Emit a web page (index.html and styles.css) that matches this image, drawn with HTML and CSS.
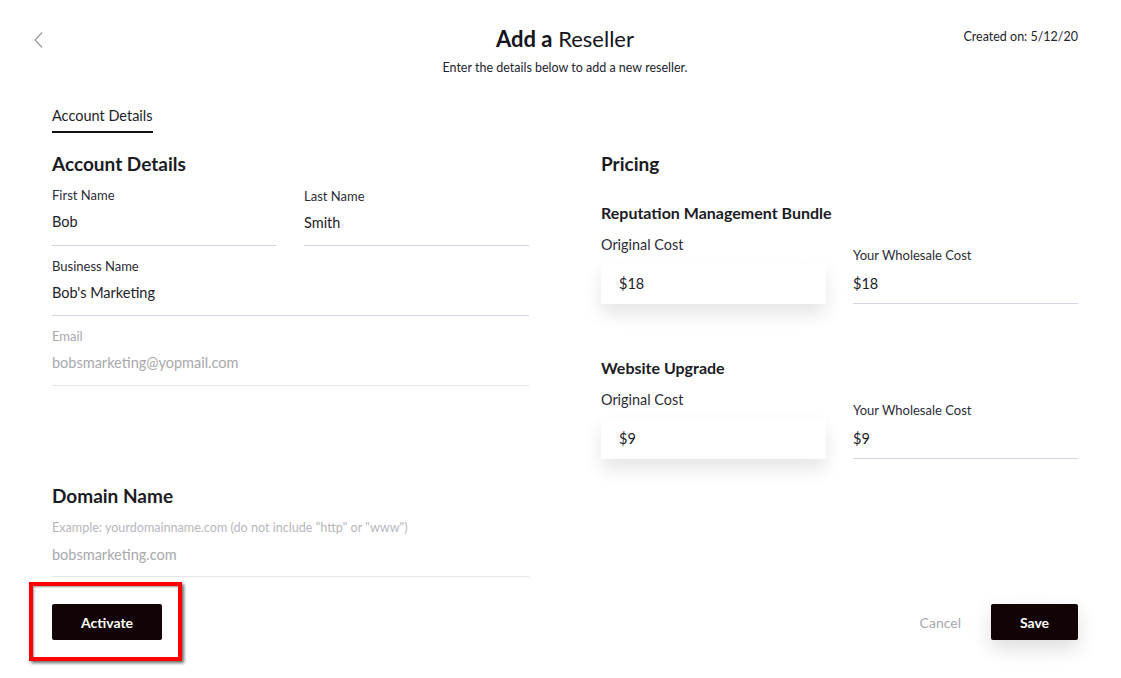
FILE: index.html
```html
<!DOCTYPE html>
<html lang="en">
<head>
<meta charset="utf-8">
<title>Add a Reseller</title>
<link rel="stylesheet" href="styles.css">
</head>
<body>
<div class="page">
  <header class="header">
    <div class="back">
      <svg width="12" height="18" viewBox="0 0 12 18"><path d="M9 1.5 L2 9 L9 16.5" fill="none" stroke="#9a9aa4" stroke-width="1.2"/></svg>
    </div>
    <div class="title-block">
      <h1 class="title"><b>Add a</b> Reseller</h1>
      <p class="subtitle">Enter the details below to add a new reseller.</p>
    </div>
    <div class="created">Created on: 5/12/20</div>
  </header>

  <nav class="tabs">
    <span class="tab active">Account Details</span>
  </nav>

  <main class="grid">
    <section class="col">
      <h2 class="section-title">Account Details</h2>
      <div class="row2">
        <div class="field">
          <div class="label">First Name</div>
          <div class="value">Bob</div>
        </div>
        <div class="field">
          <div class="label">Last Name</div>
          <div class="value">Smith</div>
        </div>
      </div>
      <div class="field">
        <div class="label">Business Name</div>
        <div class="value">Bob's Marketing</div>
      </div>
      <div class="field disabled">
        <div class="label">Email</div>
        <div class="value">bobsmarketing@yopmail.com</div>
      </div>

      <h2 class="section-title domain-title">Domain Name</h2>
      <div class="field disabled domain">
        <div class="label">Example: yourdomainname.com (do not include "http" or "www")</div>
        <div class="value">bobsmarketing.com</div>
      </div>
    </section>

    <section class="col">
      <h2 class="section-title">Pricing</h2>

      <h3 class="product first">Reputation Management Bundle</h3>
      <div class="price-row">
        <div class="orig">
          <div class="orig-label">Original Cost</div>
          <div class="orig-box">$18</div>
        </div>
        <div class="field price">
          <div class="label">Your Wholesale Cost</div>
          <div class="value">$18</div>
        </div>
      </div>

      <h3 class="product">Website Upgrade</h3>
      <div class="price-row">
        <div class="orig">
          <div class="orig-label">Original Cost</div>
          <div class="orig-box">$9</div>
        </div>
        <div class="field price">
          <div class="label">Your Wholesale Cost</div>
          <div class="value">$9</div>
        </div>
      </div>
    </section>

    <div class="footer-left">
      <button class="btn">Activate</button>
    </div>
    <div class="footer-right">
      <button class="link-btn">Cancel</button>
      <button class="btn save">Save</button>
    </div>
  </main>

  <div class="highlight"></div>
</div>
</body>
</html>
```

FILE: styles.css
```css
* { box-sizing: border-box; }

html, body {
  margin: 0;
  padding: 0;
  background: #ffffff;
}

body {
  font-family: Lato, "Open Sans", "Liberation Sans", sans-serif;
  color: #1d1d28;
}

.page {
  position: relative;
  width: 1121px;
  height: 678px;
  overflow: hidden;
}

.header {
  display: grid;
  grid-template-columns: 220px 1fr 201px;
  padding: 24px 43px 0 33px;
}

.back {
  padding-top: 7px;
  height: 30px;
}
.back svg { display: block; }

.title-block {
  text-align: center;
}

.title {
  margin: 0;
  font-size: 22px;
  line-height: 30px;
  font-weight: 400;
  color: #14141c;
}
.title b { font-weight: 700; }

.subtitle {
  margin: 6px 0 0;
  font-size: 12.5px;
  line-height: 16px;
  color: #23232e;
}

.created {
  text-align: right;
  font-size: 12.5px;
  line-height: 18px;
  padding-top: 4px;
  color: #23232e;
}

.tabs {
  margin: 30px 0 0 52px;
  display: flex;
}

.tab {
  font-size: 14.5px;
  line-height: 20px;
  padding-bottom: 5px;
  white-space: nowrap;
  color: #1d1d28;
}
.tab.active {
  border-bottom: 2px solid #111;
}

.grid {
  display: grid;
  grid-template-columns: 477px 477px;
  column-gap: 72px;
  padding-left: 52px;
  margin-top: 19px;
}

.col { display: flex; flex-direction: column; }

.section-title {
  margin: 0;
  font-size: 19px;
  line-height: 24px;
  font-weight: 700;
  color: #1b1b24;
}

.row2 {
  display: grid;
  grid-template-columns: 224px 225px;
  column-gap: 28px;
}

.field {
  margin-top: 11px;
  border-bottom: 1px solid #d3d6e2;
  padding-bottom: 12px;
}
.field + .field { margin-top: 12px; }
.row2 + .field { margin-top: 12px; }

.label {
  font-size: 13px;
  line-height: 16px;
  color: #2c2c38;
}

.value {
  margin-top: 9px;
  font-size: 14.5px;
  line-height: 20px;
  color: #1d1d28;
}

.field.disabled { border-bottom-color: #e6e6ea; }
.field.disabled .label,
.field.disabled .value { color: #a8a8ae; }

.domain-title { margin-top: 98px; }
.field.domain { margin-top: 12px; padding-bottom: 11px; }
.field.domain .label { color: #b7b7bc; font-size: 12.6px; }

.product {
  margin: 54px 0 0;
  font-size: 16px;
  line-height: 20px;
  font-weight: 700;
  color: #1b1b24;
}
.product.first { margin-top: 27px; }

.price-row {
  display: grid;
  grid-template-columns: 225px 225px;
  column-gap: 27px;
  align-items: end;
}

.orig-label {
  margin-top: 12px;
  font-size: 14.4px;
  line-height: 20px;
  color: #2c2c38;
}

.orig-box {
  margin-top: 8px;
  height: 41px;
  padding: 11px 18px;
  font-size: 14.5px;
  line-height: 20px;
  background: #fff;
  box-shadow: 0 10px 18px rgba(0, 0, 0, 0.10);
  color: #1d1d28;
}

.field.price {
  margin-top: 0;
  padding-bottom: 9px;
}
.field.price .value { margin-top: 11px; }

.footer-left, .footer-right {
  margin-top: 27px;
  display: flex;
  align-items: center;
}
.footer-right { justify-content: flex-end; }

.btn {
  height: 36px;
  width: 110px;
  border: none;
  border-radius: 2px;
  background: #120404;
  color: #fff;
  font-family: Lato, "Open Sans", "Liberation Sans", sans-serif;
  font-size: 14px;
  font-weight: 700;
  cursor: pointer;
}

.btn.save {
  width: 87px;
  box-shadow: 0 8px 20px rgba(0, 0, 0, 0.14);
}

.link-btn {
  background: none;
  border: none;
  padding: 0;
  margin-right: 30px;
  font-family: Lato, "Open Sans", "Liberation Sans", sans-serif;
  font-size: 14px;
  color: #a8a8ae;
}

.highlight {
  position: absolute;
  left: 29px;
  top: 582px;
  width: 153px;
  height: 79px;
  border: 4px solid #f00;
  box-shadow: 2px 2px 3px rgba(0, 0, 0, 0.6), inset 1px 1px 2px rgba(0,0,0,0.4);
  pointer-events: none;
}
```
